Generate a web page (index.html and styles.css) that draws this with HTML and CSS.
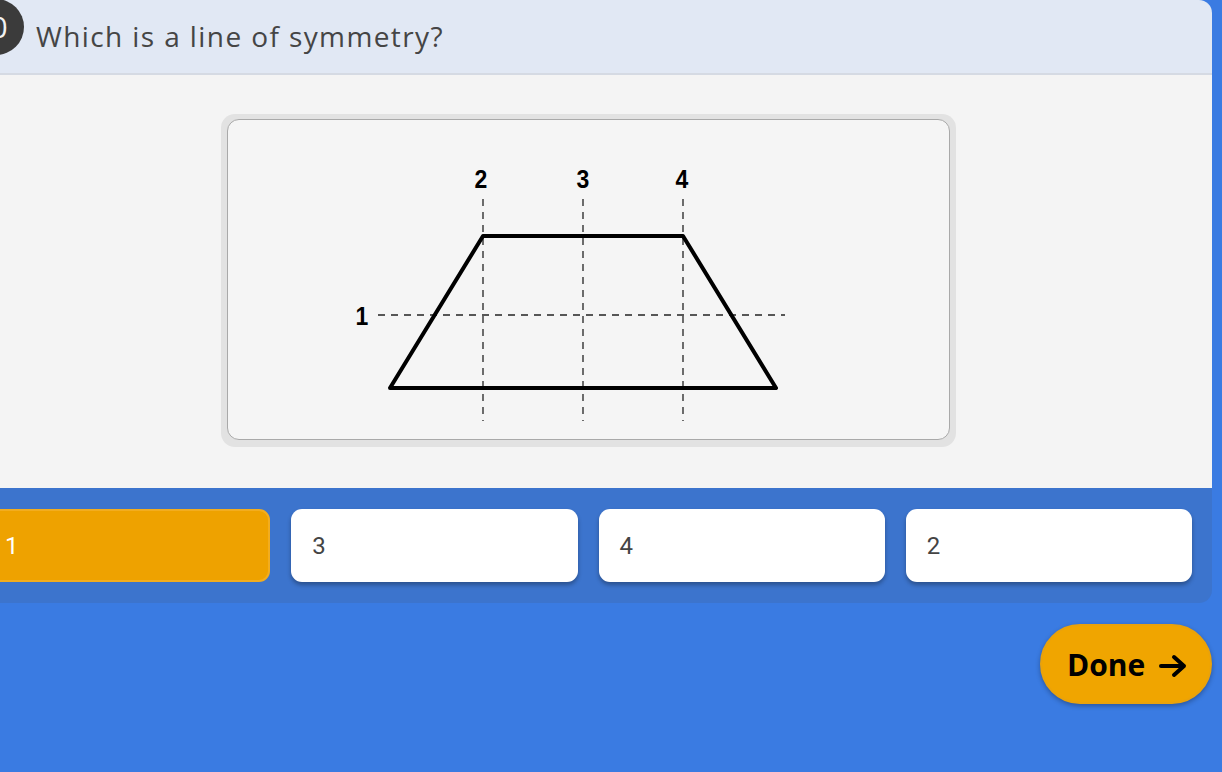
FILE: index.html
```html
<!DOCTYPE html>
<html lang="en">
<head>
<meta charset="utf-8">
<title>Which is a line of symmetry?</title>
<link rel="stylesheet" href="styles.css">
</head>
<body>
<main class="card">
  <header class="q-header">
    <span class="q-badge">0</span>
    <h1 class="q-title">Which is a line of symmetry?</h1>
  </header>
  <section class="q-body">
    <div class="figure-frame">
      <div class="figure">
        <svg class="diagram" width="721" height="319" viewBox="228 120 721 319" xmlns="http://www.w3.org/2000/svg">
          <g stroke="#222" stroke-width="1.3" stroke-dasharray="7 6" fill="none">
            <line x1="483" y1="199" x2="483" y2="421"/>
            <line x1="583" y1="199" x2="583" y2="421"/>
            <line x1="683" y1="199" x2="683" y2="421"/>
            <line x1="378" y1="315" x2="785" y2="315"/>
          </g>
          <polygon points="483,236 683,236 776,388 390,388" fill="none" stroke="#000" stroke-width="4" stroke-linejoin="round"/>
          <g font-family="Liberation Sans, Arial, sans-serif" font-weight="700" font-size="25" fill="#000" text-anchor="middle">
            <text x="481" y="188" transform="translate(481 0) scale(0.92 1) translate(-481 0)">2</text>
            <text x="583" y="188" transform="translate(583 0) scale(0.92 1) translate(-583 0)">3</text>
            <text x="682" y="188" transform="translate(682 0) scale(0.92 1) translate(-682 0)">4</text>
            <text x="362" y="325" transform="translate(362 0) scale(0.92 1) translate(-362 0)">1</text>
          </g>
        </svg>
      </div>
    </div>
  </section>
  <section class="answers">
    <button class="answer selected">1</button>
    <button class="answer">3</button>
    <button class="answer">4</button>
    <button class="answer">2</button>
  </section>
</main>
<div class="actions">
  <button class="done">Done
    <svg class="arrow" width="30" height="24" viewBox="0 0 30 24" xmlns="http://www.w3.org/2000/svg">
      <path d="M3 12 H26 M16 3 L26 12 L16 21" fill="none" stroke="#000" stroke-width="4" stroke-linecap="round" stroke-linejoin="round"/>
    </svg>
  </button>
</div>
</body>
</html>
```
FILE: styles.css
```css
html, body {
  margin: 0;
  padding: 0;
}
body {
  background: #3a7be2;
  width: 1222px;
  height: 772px;
  overflow: hidden;
  font-family: "Open Sans", "Noto Sans", sans-serif;
}
.card {
  margin-left: -36px;
  width: 1248px;
  border-radius: 0 13px 13px 0;
  overflow: hidden;
}
.q-header {
  position: relative;
  height: 73px;
  background: #e1e8f4;
  border-bottom: 2px solid #d5dae3;
  display: flex;
  align-items: center;
  padding-left: 72px;
  box-sizing: content-box;
}
.q-badge {
  position: absolute;
  left: 4px;
  top: -1px;
  width: 56px;
  height: 56px;
  border-radius: 50%;
  background: #3b3b3b;
  color: #f2f2f2;
  font-size: 30px;
  line-height: 56px;
  text-align: center;
  padding-left: 6px;
  box-sizing: border-box;
}
.q-title {
  margin: 0;
  font-family: "Open Sans", "Noto Sans", sans-serif;
  font-weight: 400;
  font-size: 28px;
  letter-spacing: 1.4px;
  color: #454545;
  padding-bottom: 1px;
}
.q-body {
  background: #f4f4f4;
  height: 413px;
  display: flex;
  justify-content: center;
  align-items: flex-start;
  padding-top: 39px;
  box-sizing: border-box;
}
.figure-frame {
  background: #e2e2e2;
  padding: 5px 6px 7px 6px;
  border-radius: 14px;
}
.figure {
  border: 1px solid #a9a9a9;
  border-radius: 12px;
  background: #f5f5f5;
  width: 721px;
  height: 319px;
}
.diagram {
  display: block;
}
.answers {
  background: #3c74cd;
  padding: 21px 20px 21px 20px;
  display: grid;
  grid-template-columns: repeat(4, 1fr);
  gap: 21px;
}
.answer {
  height: 73px;
  border: none;
  border-radius: 11px;
  background: #fff;
  box-shadow: 0 3px 4px rgba(0, 0, 0, 0.3);
  text-align: left;
  padding: 0 21px;
  font-family: Roboto, "Open Sans", sans-serif;
  font-size: 24px;
  color: #444;
}
.answer.selected {
  background: #eea200;
  color: #fff;
  border: 2px solid #f2ad1f;
  padding-left: 19px;
  box-shadow: none;
}
.actions {
  display: flex;
  justify-content: flex-end;
  padding-top: 21px;
  width: 1212px;
}
.done {
  height: 80px;
  width: 172px;
  border-radius: 40px;
  border: 2px solid #e9a20c;
  background: #f0a500;
  box-shadow: 0 2px 5px rgba(0, 0, 0, 0.3);
  display: flex;
  align-items: center;
  gap: 13px;
  padding: 0 0 0 25px;
  font-family: "Open Sans", sans-serif;
  font-weight: 700;
  font-size: 30px;
  color: #000;
}
.arrow {
  display: block;
  margin-top: 3px;
}
```
